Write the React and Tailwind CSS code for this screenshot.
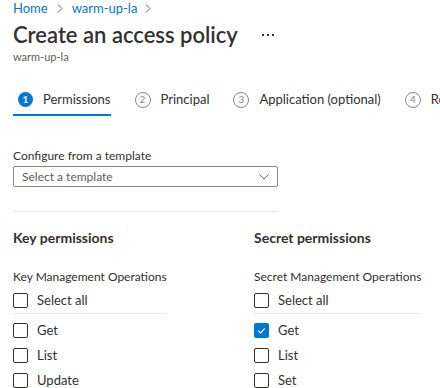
import React from 'react';

const font = {fontFamily: 'Lato, "Open Sans", sans-serif'};

const tabs = [
    {n: 1, label: 'Permissions', active: true},
    {n: 2, label: 'Principal'},
    {n: 3, label: 'Application (optional)'},
    {n: 4, label: 'Review + create'},
];

function Check({checked, label}) {
    return (
        <div className="flex items-center h-[25px]">
            {checked ? (
                <div className="w-[15px] h-[15px] rounded-[2px] bg-[#0078d4] flex items-center justify-center">
                    <svg width="11" height="11" viewBox="0 0 12 12" fill="none">
                        <path d="M2.5 6.3 L5 8.6 L9.6 3.6" stroke="white" strokeWidth="1.2" />
                    </svg>
                </div>
            ) : (
                <div className="w-[15px] h-[15px] rounded-[2px] border border-[#323130]" />
            )}
            <span className="ml-[9px] text-[13px] text-[#323130]">{label}</span>
        </div>
    );
}

function Column({title, group, items}) {
    return (
        <div className="whitespace-nowrap">
            <div className="text-[14px] font-bold text-[#323130] leading-[20px]">{title}</div>
            <div className="w-fit">
                <div className="mt-[21px] text-[12px] text-[#323130] leading-[16px]">{group}</div>
                <div className="mt-[3px]">
                    <Check label="Select all" />
                </div>
                <div className="border-t border-[#edebe9] mb-[4px]" />
                {items.map((it) => (
                    <Check key={it.label} label={it.label} checked={it.checked} />
                ))}
            </div>
        </div>
    );
}

export default function App() {
    return (
        <div className="w-[440px] h-[388px] overflow-hidden bg-white px-[13px]" style={font}>
            <div className="flex items-center h-[16px] text-[13px] text-[#0078d4] leading-[14px]">
                <span>Home</span>
                <span className="mx-[9px]">
                    <svg width="6" height="9" viewBox="0 0 6 9"><path d="M1 0.5 L5 4.5 L1 8.5" stroke="#605e5c" fill="none" strokeWidth="0.9" /></svg>
                </span>
                <span>warm-up-la</span>
                <span className="ml-[8px]">
                    <svg width="6" height="9" viewBox="0 0 6 9"><path d="M1 0.5 L5 4.5 L1 8.5" stroke="#605e5c" fill="none" strokeWidth="0.9" /></svg>
                </span>
            </div>
            <div className="flex items-center mt-[4px] h-[30px]">
                <h1 className="text-[22px] font-semibold text-[#323130] leading-[30px]">Create an access policy</h1>
                <div className="ml-[24px] flex gap-[3px] items-center">
                    <span className="w-[2px] h-[2px] bg-[#323130]" />
                    <span className="w-[2px] h-[2px] bg-[#323130]" />
                    <span className="w-[2px] h-[2px] bg-[#323130]" />
                </div>
            </div>
            <div className="text-[11px] text-[#605e5c] leading-[14px]">warm-up-la</div>

            <div className="flex mt-[21px] whitespace-nowrap">
                {tabs.map((t) => (
                    <div
                        key={t.n}
                        className={
                            'flex items-center h-[31px] mr-[24px] border-b-2 shrink-0 ' +
                            (t.active ? 'border-[#0078d4]' : 'border-transparent')
                        }
                    >
                        {t.active ? (
                            <div className="ml-[5px] w-[15px] h-[15px] rounded-full bg-[#0078d4] text-white text-[10px] font-bold flex items-center justify-center">
                                {t.n}
                            </div>
                        ) : (
                            <div className="w-[16px] h-[16px] rounded-full border border-[#8a8886] text-[#8a8886] text-[10px] flex items-center justify-center">
                                {t.n}
                            </div>
                        )}
                        <span className="ml-[10px] text-[13px] text-[#323130]">{t.label}</span>
                    </div>
                ))}
            </div>

            <div className="mt-[32px] text-[12px] text-[#323130] leading-[16px]">Configure from a template</div>
            <div className="mt-[2px] w-[265px] h-[21px] border border-[#8a8886] rounded-[2px] flex items-center justify-between pl-[8px] pr-[8px]">
                <span className="text-[12px] text-[#605e5c]">Select a template</span>
                <svg width="10" height="6" viewBox="0 0 10 6"><path d="M0.5 0.5 L5 5 L9.5 0.5" stroke="#605e5c" fill="none" strokeWidth="0.9" /></svg>
            </div>
            <div className="mt-[24px] w-[265px] border-t border-[#edebe9]" />

            <div className="grid grid-cols-[241px_1fr] mt-[16px]">
                <Column
                    title="Key permissions"
                    group="Key Management Operations"
                    items={[{label: 'Get'}, {label: 'List'}, {label: 'Update'}, {label: 'Create'}]}
                />
                <Column
                    title="Secret permissions"
                    group="Secret Management Operations"
                    items={[{label: 'Get', checked: true}, {label: 'List'}, {label: 'Set'}, {label: 'Delete'}]}
                />
            </div>
        </div>
    );
}
